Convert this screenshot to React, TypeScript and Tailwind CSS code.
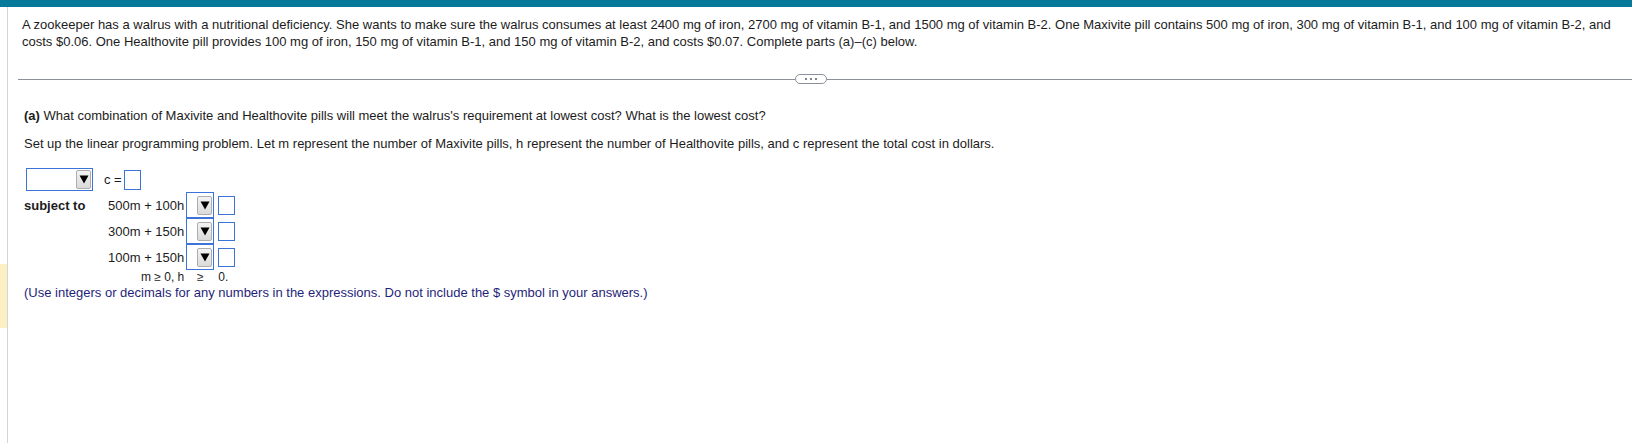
import React from 'react';

function Arrow() {
  return (
    <svg width="10" height="9" viewBox="0 0 10 9" className="block">
      <polygon points="0.5,0.5 9.5,0.5 5,8.5" fill="#000" />
    </svg>
  );
}

function DropButton({ className }: { className: string }) {
  return (
    <div
      className={`flex items-center justify-center rounded-[2px] border border-[#adadad] bg-gradient-to-b from-[#f4f4f4] to-[#dadada] ${className}`}
    >
      <Arrow />
    </div>
  );
}

function AnswerBox() {
  return <div className="h-[19px] w-[17px] border border-[#3b73d6] bg-white" />;
}

const rows = ['500m + 100h', '300m + 150h', '100m + 150h'];

export default function App() {
  return (
    <div className="min-h-[443px] bg-white font-['Liberation_Sans',Arial,sans-serif] text-[13px] leading-[17px] text-[#1c1c1c]">
      <div className="h-[7px] bg-[#07799b]" />
      <div className="flex min-h-[436px]">
        {/* left gutter with the yellow marker */}
        <div className="flex w-[7px] shrink-0 flex-col">
          <div className="h-[257px]" />
          <div className="h-[64px] bg-[#fbefc3]" />
        </div>

        <div className="flex-1 border-l border-[#d4d5db]">
          <p className="pl-[14px] pr-[18px] pt-[9px]">
            A zookeeper has a walrus with a nutritional deficiency. She wants to make sure the walrus consumes at least 2400 mg of iron, 2700 mg of vitamin B-1, and 1500 mg of vitamin B-2. One Maxivite pill contains 500 mg of iron, 300 mg of vitamin B-1, and 100 mg of vitamin B-2, and costs $0.06. One Healthovite pill provides 100 mg of iron, 150 mg of vitamin B-1, and 150 mg of vitamin B-2, and costs $0.07. Complete parts (a)–(c) below.
          </p>

          <div className="mt-[24px] ml-[10px] flex h-[10px] items-center">
            <div className="h-px w-[777px] bg-[#8b909a]" />
            <div className="flex h-[10px] w-[32px] items-center justify-center gap-[3px] rounded-full border border-[#8b909a] bg-white">
              <span className="h-[2px] w-[2px] rounded-full bg-[#555b66]" />
              <span className="h-[2px] w-[2px] rounded-full bg-[#555b66]" />
              <span className="h-[2px] w-[2px] rounded-full bg-[#555b66]" />
            </div>
            <div className="h-px flex-1 bg-[#8b909a]" />
          </div>

          <div className="pl-[16px]">
            <p className="mt-[23px]">
              <span className="font-bold">(a)</span> What combination of Maxivite and Healthovite pills will meet the walrus's requirement at lowest cost? What is the lowest cost?
            </p>
            <p className="mt-[11px]">
              Set up the linear programming problem. Let m represent the number of Maxivite pills, h represent the number of Healthovite pills, and c represent the total cost in dollars.
            </p>

            <div className="mt-[16px] ml-[2px] flex h-[23px] items-center">
              <div className="flex h-[23px] w-[67px] items-center justify-end border border-[#3b73d6] pr-px">
                <DropButton className="h-[19px] w-[15px]" />
              </div>
              <span className="ml-[11px]">c =</span>
              <div className="ml-[2px] h-[20px] w-[17px] border border-[#3b73d6]" />
            </div>

            <div className="mt-px grid w-max grid-cols-[84px_auto_28px_4px_17px] items-center">
              {rows.map((r, i) => (
                <React.Fragment key={r}>
                  <div className="font-bold">{i === 0 ? 'subject to' : ''}</div>
                  <div className="pr-[2px] text-right whitespace-nowrap">{r}</div>
                  <div className="flex h-[26px] items-center justify-end border border-[#3b73d6] pr-px">
                    <DropButton className="h-[19px] w-[15px]" />
                  </div>
                  <div />
                  <AnswerBox />
                </React.Fragment>
              ))}
              <div />
              <div className="h-[15px] pr-[2px] text-right text-[12px] leading-[15px] whitespace-nowrap">m ≥ 0, h</div>
              <div className="text-center text-[12px] leading-[15px]">≥</div>
              <div />
              <div className="text-[12px] leading-[15px]">0.</div>
            </div>

            <p className="leading-[16px] text-[#1f1f7a]">
              (Use integers or decimals for any numbers in the expressions. Do not include the $ symbol in your answers.)
            </p>
          </div>
        </div>
      </div>
    </div>
  );
}
